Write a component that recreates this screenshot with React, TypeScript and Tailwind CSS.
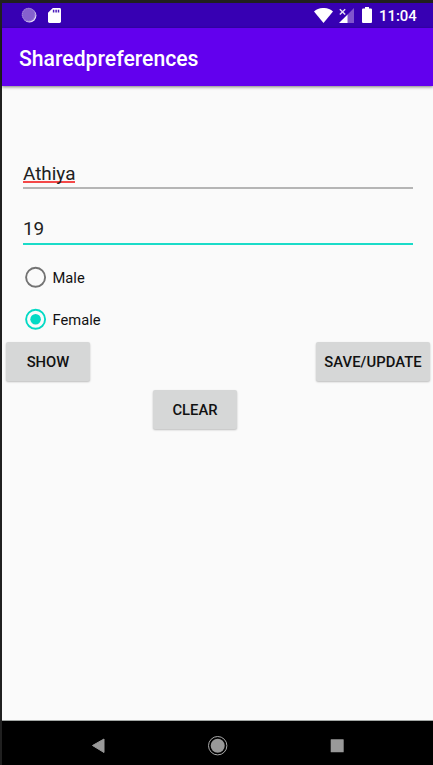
import type { ReactNode } from 'react';

function StatusBar() {
  return (
    <div className="flex h-[25px] items-start bg-[#3700b3]">
      <svg className="ml-[19px] mt-[4px]" width="16" height="16" viewBox="0 0 16 16">
        <circle cx="8.5" cy="8.6" r="6.9" fill="#e6dcf7" />
        <circle cx="7.6" cy="7.7" r="6.9" fill="#8560ce" />
        <circle cx="7.6" cy="7.7" r="6.3" fill="none" stroke="#a98fdf" strokeWidth="1" strokeDasharray="1 1" />
      </svg>
      <svg className="ml-[11px] mt-[5px]" width="13" height="15" viewBox="0 0 13 15">
        <path d="M4.8 0H11.6Q13 0 13 1.4V13.6Q13 15 11.6 15H1.4Q0 15 0 13.6V4.8Z" fill="#fff" />
        <path d="M5.6 1.8V4.6M8.1 1.8V4.6M10.5 1.8V4.6" stroke="#4a1abb" strokeWidth="1.5" />
      </svg>
      <div className="flex-1" />
      <svg className="mt-[5px]" width="19" height="15" viewBox="0 0 19 15">
        <path d="M0 3.5C5-1.2 14-1.2 19 3.5L9.5 15Z" fill="#fff" />
      </svg>
      <svg className="ml-[6px] mt-[5px]" width="15" height="15" viewBox="0 0 15 15">
        <path d="M8.6 6.4L15 0V15H8.6Z" fill="#8054cd" />
        <path d="M0 15L8.6 6.4V15Z" fill="#fff" />
        <path d="M.8 1.2L6.2 6.6M6.2 1.2L.8 6.6" stroke="#e6def6" strokeWidth="1.4" />
      </svg>
      <svg className="ml-[8px] mt-[4px]" width="10" height="16" viewBox="0 0 10 16">
        <path d="M3 0H7V1.6H8.9Q10 1.6 10 2.7V14.9Q10 16 8.9 16H1.1Q0 16 0 14.9V2.7Q0 1.6 1.1 1.6H3Z" fill="#fff" />
      </svg>
      <span className="ml-[7px] w-[54px] pt-[3px] text-[14.9px] leading-[20px] font-medium text-white">11:04</span>
    </div>
  );
}

function Radio({ label, checked = false }: { label: string; checked?: boolean }) {
  return (
    <div className="flex h-[42px] items-center">
      <svg width="23" height="22" viewBox="0 0 23 22">
        <circle cx="11.6" cy="11.3" r="9.5" fill="none" stroke={checked ? '#03dac5' : '#737373'} strokeWidth="1.9" />
        {checked && <circle cx="11.6" cy="11.3" r="5.3" fill="#03dac5" />}
      </svg>
      <span className="ml-[5.5px] pt-[1px] text-[14.7px] leading-[20px] text-[#111]">{label}</span>
    </div>
  );
}

function Button({ children, wide = false }: { children: ReactNode; wide?: boolean }) {
  return (
    <button
      className={`h-[39px] rounded-[2px] bg-[#d6d7d7] pt-[1px] text-[14.8px] font-medium text-[#111] shadow-[0_1px_2px_rgba(0,0,0,0.25)] ${wide ? 'w-[114px] tracking-[0.06px]' : 'w-[84px]'}`}
    >
      {children}
    </button>
  );
}

export default function App() {
  return (
    <div className="h-[765px] w-[433px] overflow-hidden bg-[#202020] pt-[3px] pl-[2px] font-['Roboto',sans-serif]">
      <div className="flex h-[762px] flex-col bg-[#fafafa]">
        <StatusBar />
        <header className="flex h-[58px] items-center bg-[#6200ee] pl-[17px] shadow-[0_1px_3px_rgba(0,0,0,0.5)]">
          <h1 className="pt-[3px] text-[21.2px] leading-[26px] font-medium text-white">Sharedpreferences</h1>
        </header>
        <main className="flex-1 pt-[76px]">
          <div className="mr-[20px] ml-[21px] flex h-[27px] items-start border-b-2 border-[#b5b5b5]">
            <span className="h-[21px] border-b-2 border-[#f44848] text-[18.9px] leading-[24px] text-[#212121]">Athiya</span>
          </div>
          <div className="mt-[28px] mr-[20px] ml-[21px] h-[28px] border-b-2 border-[#1adbc8] text-[18.9px] leading-[24px] text-[#212121]">
            19
          </div>
          <div className="mt-[11px] ml-[22px]">
            <Radio label="Male" />
            <Radio label="Female" checked />
          </div>
          <div className="mt-[2px] mr-[3px] ml-[4px] flex justify-between">
            <Button>SHOW</Button>
            <Button wide>SAVE/UPDATE</Button>
          </div>
          <div className="mt-[9px] ml-[151px] flex">
            <Button>CLEAR</Button>
          </div>
        </main>
        <nav className="h-[45px] border-t border-[#a3a7a5] bg-black">
          <svg width="431" height="44" viewBox="2 721 431 44">
            <path d="M92.5 745.5L104 739V752.5Z" fill="#999" stroke="#999" strokeLinejoin="round" />
            <circle cx="217.7" cy="745.7" r="9.2" fill="none" stroke="#aaa" strokeWidth="1" />
            <circle cx="217.7" cy="745.7" r="7" fill="#999" />
            <rect x="330.7" y="739.2" width="13" height="13" rx=".5" fill="#999" />
          </svg>
        </nav>
      </div>
    </div>
  );
}
